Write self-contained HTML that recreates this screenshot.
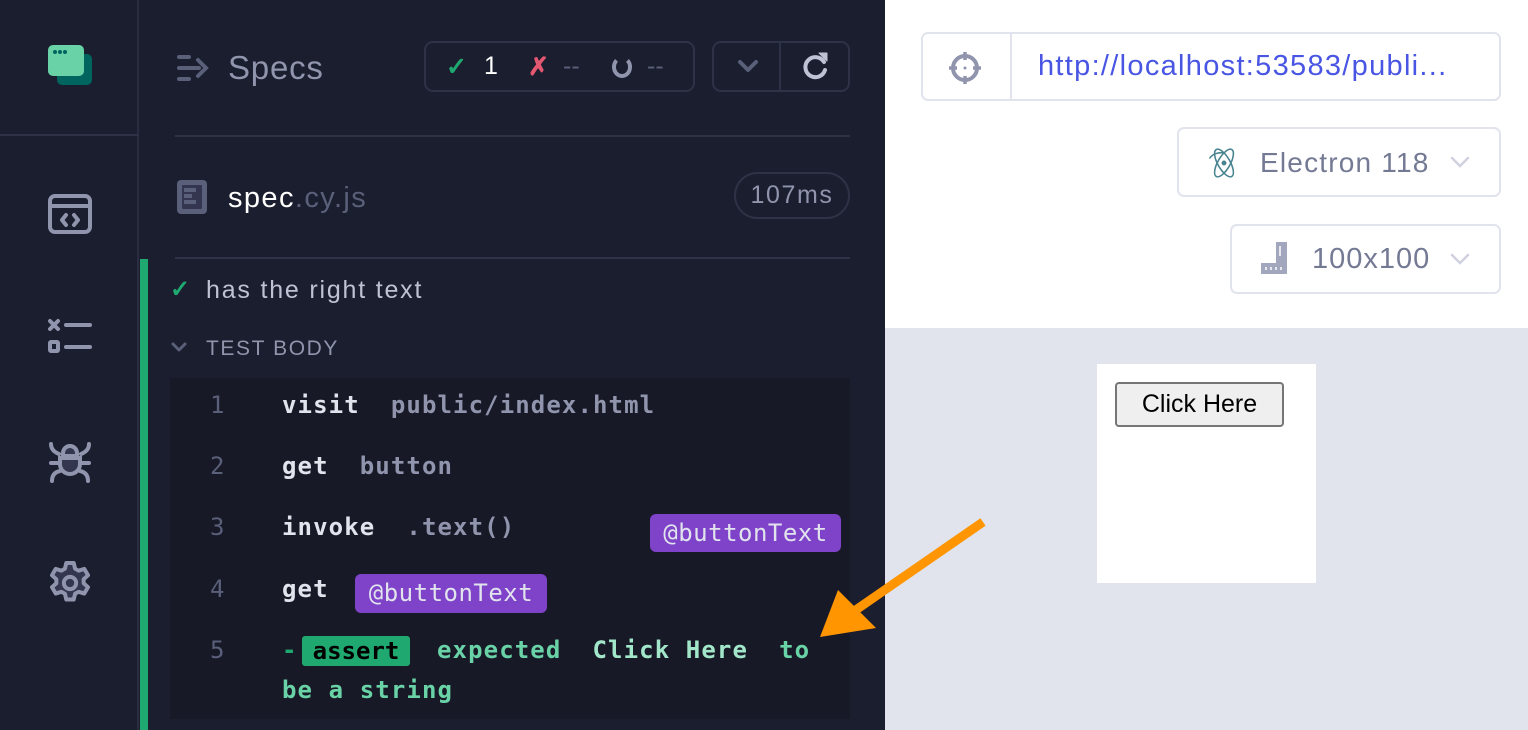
<!DOCTYPE html>
<html><head><meta charset="utf-8"><style>
*{margin:0;padding:0;box-sizing:border-box}
body{width:1528px;height:730px;overflow:hidden;background:#1b1e2e;font-family:"Liberation Sans",sans-serif;position:relative}
.a{position:absolute}
.mono{font-family:"DejaVu Sans Mono","Liberation Mono",monospace;font-weight:bold;letter-spacing:1.1px}
</style></head><body>
<!-- nav -->
<div class="a" style="left:0;top:0;width:139px;height:730px;background:#1b1e2e;border-right:2px solid #2a2d40"></div>
<div class="a" style="left:0;top:134px;width:139px;height:2px;background:#2e3247"></div>
<div class="a" style="left:57px;top:54px;width:35px;height:31px;border-radius:5px;background:#00645f"></div>
<div class="a" style="left:48px;top:45px;width:36px;height:31px;border-radius:5px;background:#69d3a7"></div>
<div class="a" style="left:53px;top:50px;width:4px;height:4px;border-radius:2px;background:#00645f;box-shadow:5px 0 #00645f,10px 0 #00645f"></div>
<svg class="a" style="left:48px;top:194px" width="44" height="40" viewBox="0 0 44 40" fill="none" stroke="#9095ad" stroke-width="4" stroke-linecap="round" stroke-linejoin="round"><rect x="2" y="2" width="40" height="36" rx="5"/><path d="M2 12H42M18 21l-4 5 4 5M26 21l4 5-4 5"/></svg>
<svg class="a" style="left:47px;top:318px" width="46" height="38" viewBox="0 0 46 38" fill="none" stroke="#9095ad" stroke-width="4" stroke-linecap="round"><path d="M3 3l8 8M11 3l-8 8M19 7H43M19 29H43"/><rect x="3" y="24" width="8" height="9" rx="1"/></svg>
<svg class="a" style="left:48px;top:440px" width="44" height="44" viewBox="0 0 44 44" fill="#343650" stroke="#9095ad" stroke-width="4" stroke-linecap="round"><path d="M22 6a7 7 0 0 1 7 7v3H15v-3a7 7 0 0 1 7-7z"/><path d="M12 18h20v6a10 10 0 0 1-20 0z"/><path d="M3 4c0 5 3 8 8 10M41 4c0 5-3 8-8 10M3 23H11M33 23H41M4 41c0-6 3-9 8-10M40 41c0-6-3-9-8-10" fill="none"/></svg>
<svg class="a" style="left:48px;top:561px" width="44" height="44" viewBox="2 2 20 20" fill="#343650" stroke="#9095ad" stroke-width="1.8" stroke-linejoin="round"><path d="M10.3 2.9h3.4l.6 2.6 1.6.9 2.6-.8 1.7 2.9-2 1.8v1.8l2 1.8-1.7 2.9-2.6-.8-1.6.9-.6 2.6h-3.4l-.6-2.6-1.6-.9-2.6.8-1.7-2.9 2-1.8v-1.8l-2-1.8 1.7-2.9 2.6.8 1.6-.9z"/><circle cx="12" cy="12" r="2.8" fill="none"/></svg>
<!-- panel -->
<svg class="a" style="left:176px;top:54px" width="34" height="28" viewBox="0 0 34 28" fill="none" stroke="#5a5f7a" stroke-width="4" stroke-linecap="round"><path d="M3 3h10M3 14h20M3 25h10M22 6l8 8-8 8"/></svg>
<div class="a" style="left:228px;top:49px;font-size:33px;color:#9095ad;letter-spacing:0.8px">Specs</div>
<div class="a" style="left:424px;top:41px;width:271px;height:51px;border:2px solid #2e3247;border-radius:9px"></div>
<div class="a" style="left:446px;top:52px;font-size:25px;color:#1fa971;font-weight:bold">✓</div>
<div class="a" style="left:484px;top:52px;font-size:25px;color:#fff">1</div>
<div class="a" style="left:528px;top:52px;font-size:25px;color:#e45770;font-weight:bold">✗</div>
<div class="a" style="left:563px;top:52px;font-size:25px;color:#5a5f7a">--</div>
<div class="a" style="left:612px;top:56px;width:20px;height:22px;border:4px solid #9095ad;border-top-color:transparent;border-radius:50%"></div>
<div class="a" style="left:647px;top:52px;font-size:25px;color:#5a5f7a">--</div>
<div class="a" style="left:712px;top:41px;width:138px;height:51px;border:2px solid #2e3247;border-radius:9px"></div>
<div class="a" style="left:779px;top:42px;width:2px;height:49px;background:#2e3247"></div>
<svg class="a" style="left:736px;top:58px" width="24" height="16" viewBox="0 0 24 16" fill="none" stroke="#5a5f7a" stroke-width="4" stroke-linecap="round" stroke-linejoin="round"><path d="M4 4l8 8 8-8"/></svg>
<svg class="a" style="left:800px;top:49px" width="32" height="34" viewBox="0 0 32 34" fill="none" stroke="#bfc2d4" stroke-width="4" stroke-linecap="round"><path d="M24 13a10 10 0 1 0 1 8"/><path d="M19 4l8 0 0 8z" fill="#bfc2d4" stroke-width="1" stroke-linejoin="round"/></svg>
<div class="a" style="left:175px;top:135px;width:675px;height:2px;background:#2e3247"></div>
<svg class="a" style="left:176px;top:179px" width="32" height="36" viewBox="0 0 32 36"><rect x="1" y="1" width="30" height="34" rx="4" fill="#5a5f7a"/><rect x="6" y="6" width="20" height="24" rx="1" fill="#343650"/><rect x="8" y="9" width="12" height="4" fill="#5a5f7a"/><rect x="8" y="15" width="8" height="4" fill="#5a5f7a"/><rect x="8" y="21" width="12" height="4" fill="#5a5f7a"/></svg>
<div class="a" style="left:228px;top:182px;font-size:29px;color:#fff;letter-spacing:1.4px">spec<span style="color:#5a5f7a">.cy.js</span></div>
<div class="a" style="left:734px;top:172px;width:116px;height:47px;border:2px solid #2e3247;border-radius:24px;color:#9095ad;font-size:25px;text-align:center;line-height:43px;letter-spacing:1.6px">107ms</div>
<div class="a" style="left:175px;top:257px;width:675px;height:2px;background:#2e3247"></div>
<div class="a" style="left:140px;top:259px;width:8px;height:471px;background:#1fa971"></div>
<div class="a" style="left:170px;top:275px;font-size:24px;color:#1fa971;font-weight:bold">✓</div>
<div class="a" style="left:206px;top:276px;font-size:25px;color:#bfc2d4;letter-spacing:1.8px">has the right text</div>
<svg class="a" style="left:170px;top:341px" width="18" height="12" viewBox="0 0 18 12" fill="none" stroke="#5a5f7a" stroke-width="3" stroke-linecap="round" stroke-linejoin="round"><path d="M3 3l6 6 6-6"/></svg>
<div class="a" style="left:206px;top:337px;font-size:21px;color:#9095ad;letter-spacing:1.6px">TEST BODY</div>
<div class="a" style="left:170px;top:378px;width:680px;height:341px;background:#171926"></div>
<div class="a" style="left:210px;top:390px;font-size:24px;color:#5a5f7a;line-height:30px;font-family:'DejaVu Sans Mono',monospace">
<div class="a" style="top:0">1</div><div class="a" style="top:61px">2</div><div class="a" style="top:122px">3</div><div class="a" style="top:184px">4</div><div class="a" style="top:245px">5</div></div>
<div class="a mono" style="left:282px;top:390px;font-size:24px;line-height:30px;color:#e1e3ed;white-space:pre">visit  <span style="color:#9095ad">public/index.html</span></div>
<div class="a mono" style="left:282px;top:451px;font-size:24px;line-height:30px;color:#e1e3ed;white-space:pre">get  <span style="color:#9095ad">button</span></div>
<div class="a mono" style="left:282px;top:512px;font-size:24px;line-height:30px;color:#e1e3ed;white-space:pre">invoke  <span style="color:#9095ad">.text()</span></div>
<div class="a mono" style="left:650px;top:514px;width:191px;height:38px;border-radius:6px;background:#7f43c9;color:#e1e3ed;font-size:24px;line-height:38px;text-align:center;font-weight:normal;letter-spacing:0.5px">@buttonText</div>
<div class="a mono" style="left:282px;top:574px;font-size:24px;line-height:30px;color:#e1e3ed">get</div>
<div class="a mono" style="left:355px;top:574px;width:192px;height:39px;border-radius:6px;background:#7f43c9;color:#e1e3ed;font-size:24px;line-height:39px;text-align:center;font-weight:normal;letter-spacing:0.5px">@buttonText</div>
<div class="a mono" style="left:282px;top:635px;font-size:24px;line-height:30px;color:#1fa971">-</div>
<div class="a mono" style="left:302px;top:636px;width:108px;height:30px;background:#1fa971;border-radius:3px;color:#000;font-size:24px;line-height:30px;text-align:center;letter-spacing:0">assert</div>
<div class="a mono" style="left:437px;top:635px;font-size:24px;line-height:30px;color:#69d3a7;white-space:pre">expected  <span style="color:#a3e7cb">Click Here</span>  to</div>
<div class="a mono" style="left:282px;top:675px;font-size:24px;line-height:30px;color:#69d3a7">be a string</div>
<!-- right -->
<div class="a" style="left:885px;top:0;width:643px;height:328px;background:#fff"></div>
<div class="a" style="left:885px;top:328px;width:643px;height:402px;background:#e1e3ed"></div>
<div class="a" style="left:921px;top:32px;width:580px;height:69px;border:2px solid #e1e3ed;border-radius:7px"></div>
<div class="a" style="left:1010px;top:33px;width:2px;height:67px;background:#e1e3ed"></div>
<svg class="a" style="left:947px;top:50px" width="36" height="36" viewBox="0 0 36 36" fill="none" stroke="#9095ad" stroke-width="4"><circle cx="18" cy="18" r="12"/><path d="M18 2v8M18 26v8M2 18h8M26 18h8" stroke-width="3.5"/><circle cx="18" cy="18" r="1.5" fill="#9095ad" stroke="none"/></svg>
<div class="a" style="left:1038px;top:50px;font-size:29px;color:#4956e3;letter-spacing:1.3px">http://localhost:53583/publi...</div>
<div class="a" style="left:1177px;top:127px;width:324px;height:70px;border:2px solid #e1e3ed;border-radius:7px"></div>
<svg class="a" style="left:1205px;top:143px" width="38" height="40" viewBox="0 0 34 36" fill="none" stroke="#47848f" stroke-width="1.4"><ellipse cx="17" cy="18" rx="14" ry="5.5" transform="rotate(60 17 18)"/><ellipse cx="17" cy="18" rx="14" ry="5.5" transform="rotate(-60 17 18)"/><path d="M4 14c2-4 8-6 14-5"/><circle cx="17" cy="18" r="1.5" fill="#47848f"/></svg>
<div class="a" style="left:1260px;top:147px;font-size:28px;color:#747994;letter-spacing:1.2px">Electron 118</div>
<svg class="a" style="left:1450px;top:156px" width="20" height="12" viewBox="0 0 20 12" fill="none" stroke="#d0d2e0" stroke-width="2.5" stroke-linecap="round"><path d="M2 2l8 8 8-8"/></svg>
<div class="a" style="left:1230px;top:224px;width:271px;height:70px;border:2px solid #e1e3ed;border-radius:7px"></div>
<svg class="a" style="left:1259px;top:240px" width="30" height="36" viewBox="0 0 30 36"><path d="M17 2h11v32H2V23h15z" fill="#a3a7be"/><path d="M21 6v10M7 27v3M12 27v3M17 27v3M22 27v3" stroke="#fff" stroke-width="1.5"/></svg>
<div class="a" style="left:1312px;top:243px;font-size:29px;color:#747994;letter-spacing:1px">100x100</div>
<svg class="a" style="left:1450px;top:253px" width="20" height="12" viewBox="0 0 20 12" fill="none" stroke="#d0d2e0" stroke-width="2.5" stroke-linecap="round"><path d="M2 2l8 8 8-8"/></svg>
<div class="a" style="left:1097px;top:364px;width:219px;height:219px;background:#fff"></div>
<div class="a" style="left:1115px;top:382px;width:169px;height:45px;background:#efefef;border:2px solid #767676;border-radius:4px;font-size:25px;color:#000;text-align:center;line-height:41px">Click Here</div>
<!-- arrow -->
<svg class="a" style="left:0;top:0" width="1528" height="730"><path d="M983 522L850 614" stroke="#ff9500" stroke-width="9"/><path d="M820 637L838 590L876 628z" fill="#ff9500"/></svg>
</body></html>
